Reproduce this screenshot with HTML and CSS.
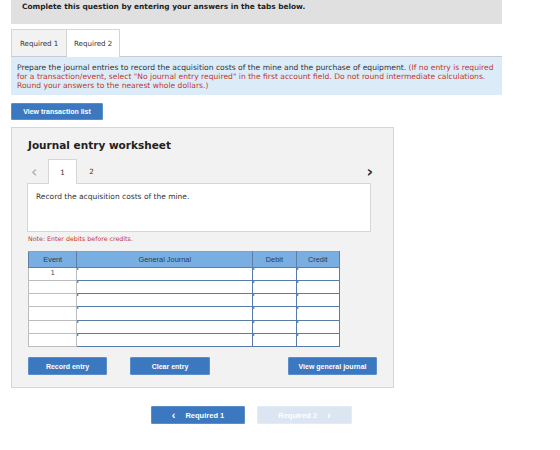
FILE: index.html
```html
<!DOCTYPE html>
<html>
<head>
<meta charset="utf-8">
<link rel="stylesheet" href="styles.css">
</head>
<body>
<div class="page">
  <div class="prompt-bar">Complete this question by entering your answers in the tabs below.</div>

  <div class="req-tabs">
    <div class="req-tab">Required 1</div>
    <div class="req-tab active">Required 2</div>
  </div>

  <div class="instructions">
    Prepare the journal entries to record the acquisition costs of the mine and the purchase of equipment. <span class="hint">(If no entry is required for a transaction/event, select "No journal entry required" in the first account field. Do not round intermediate calculations. Round your answers to the nearest whole dollars.)</span>
  </div>

  <button class="btn btn-list">View transaction list</button>

  <div class="worksheet">
    <h2 class="ws-title">Journal entry worksheet</h2>

    <div class="ws-nav">
      <span class="arrow prev">&lsaquo;</span>
      <span class="step active">1</span>
      <span class="step">2</span>
      <span class="arrow next">&rsaquo;</span>
    </div>

    <div class="ws-desc">Record the acquisition costs of the mine.</div>

    <div class="note">Note: Enter debits before credits.</div>

    <table class="journal">
      <colgroup>
        <col class="c-event">
        <col class="c-account">
        <col class="c-amt">
        <col class="c-amt">
      </colgroup>
      <thead>
        <tr>
          <th>Event</th>
          <th>General Journal</th>
          <th>Debit</th>
          <th>Credit</th>
        </tr>
      </thead>
      <tbody>
        <tr><td class="ev">1</td><td class="in"></td><td class="in"></td><td class="in"></td></tr>
        <tr><td class="ev"></td><td class="in"></td><td class="in"></td><td class="in"></td></tr>
        <tr><td class="ev"></td><td class="in"></td><td class="in"></td><td class="in"></td></tr>
        <tr><td class="ev"></td><td class="in"></td><td class="in"></td><td class="in"></td></tr>
        <tr><td class="ev"></td><td class="in"></td><td class="in"></td><td class="in"></td></tr>
        <tr><td class="ev"></td><td class="in"></td><td class="in"></td><td class="in"></td></tr>
      </tbody>
    </table>

    <div class="ws-actions">
      <button class="btn btn-record">Record entry</button>
      <button class="btn btn-clear">Clear entry</button>
      <button class="btn btn-view">View general journal</button>
    </div>
  </div>

  <div class="req-nav">
    <button class="btn btn-req"><span class="chev">&lsaquo;</span>Required 1</button>
    <button class="btn btn-req disabled">Required 2<span class="chev after">&rsaquo;</span></button>
  </div>
</div>
</body>
</html>
```
FILE: styles.css
```css
html, body {
  margin: 0;
  padding: 0;
  background: #fff;
}

.page {
  margin-left: 11px;
  width: 491px;
  font-family: "DejaVu Sans", Verdana, sans-serif;
  color: #222;
}

.prompt-bar {
  height: 24px;
  box-sizing: border-box;
  background: #e0e0e0;
  padding: 2px 0 0 11px;
  font-size: 7.4px;
  font-weight: bold;
  line-height: 9px;
  color: #222;
}

.req-tabs {
  display: flex;
  margin-top: 5px;
  height: 27px;
}

.req-tab {
  box-sizing: border-box;
  height: 27px;
  padding: 0 0 0 8px;
  display: flex;
  align-items: center;
  font-size: 7.1px;
  color: #333;
  background: #f2f2f2;
  border: 1px solid #d5d5d5;
  border-bottom: none;
}

.req-tab:first-child {
  width: 56px;
}

.req-tab.active {
  width: 53px;
  padding-left: 7px;
  background: #fff;
  border-left: none;
  position: relative;
  z-index: 1;
  margin-bottom: -1px;
  height: 28px;
}

.instructions {
  box-sizing: border-box;
  background: #dcebf8;
  border-top: 1px solid #c5ccd3;
  padding: 6px 8px 0 6px;
  font-size: 7.6px;
  line-height: 9px;
  color: #333;
  height: 39px;
}

.hint {
  color: #c0392b;
}

.btn {
  font-family: "Liberation Sans", Arial, sans-serif;
  font-weight: bold;
  font-size: 7px;
  color: #fff;
  background: #3b78bf;
  border: 1px solid #5b8fcb;
  border-radius: 1px;
  padding: 0;
  height: 18px;
  display: flex;
  align-items: center;
  justify-content: center;
}

.btn-list {
  margin-top: 8px;
  width: 92px;
  height: 17px;
}

.worksheet {
  margin-top: 7px;
  width: 383px;
  height: 261px;
  box-sizing: border-box;
  background: #f2f2f2;
  border: 1px solid #d6d6d6;
  padding: 0 22px 0 15px;
}

.ws-title {
  margin: 11px 0 0 1px;
  font-size: 10.5px;
  line-height: 12px;
  font-weight: bold;
  color: #222;
}

.ws-nav {
  display: flex;
  align-items: flex-end;
  margin-top: 7px;
  height: 25px;
}

.arrow {
  font-family: "DejaVu Sans", sans-serif;
  font-size: 16px;
  line-height: 20px;
  height: 22px;
  display: flex;
  align-items: center;
}

.arrow.prev {
  color: #aaa;
  margin-left: 4px;
  width: 17px;
}

.arrow.next {
  margin-left: auto;
  margin-right: -2px;
  color: #333;
  font-weight: bold;
}

.step {
  width: 29px;
  height: 24px;
  box-sizing: border-box;
  display: flex;
  align-items: center;
  justify-content: center;
  font-size: 7.2px;
  color: #333;
}

.step.active {
  background: #fff;
  border: 1px solid #d6d6d6;
  border-bottom: none;
  height: 25px;
  margin-bottom: -1px;
  position: relative;
  z-index: 1;
}

.ws-desc {
  box-sizing: border-box;
  width: 344px;
  height: 49px;
  background: #fff;
  border: 1px solid #d6d6d6;
  padding: 8px 8px;
  font-size: 7.5px;
  line-height: 9px;
  color: #333;
}

.note {
  margin: 3px 0 0 1px;
  font-size: 6.3px;
  line-height: 8px;
  color: #c0392b;
}

.journal {
  margin: 8px 0 0 1px;
  width: 312px;
  border-collapse: collapse;
  font-family: "Liberation Sans", Arial, sans-serif;
  table-layout: fixed;
  border: 1px solid #8aa1bd;
}

.c-event { width: 48px; }
.c-account { width: 174px; }
.c-amt { width: 43px; }

.journal th {
  background: #79aee3;
  color: #2e3b4a;
  font-size: 7.4px;
  font-weight: normal;
  height: 14.5px;
  padding: 0;
  border: 1px solid #5d7fa6;
  border-top-color: #8aa1bd;
}

.journal td {
  height: 12.3px;
  padding: 0;
  background: #fff;
}

.journal td.ev {
  border: 1px solid #bcbcbc;
  text-align: center;
  font-size: 7px;
  color: #444;
  vertical-align: top;
  line-height: 9px;
}

.journal td.in {
  border: 1.5px solid #557ba8;
  position: relative;
}

/* small marker in the corner of each entry field */
.journal td.in::before {
  content: "";
  position: absolute;
  left: 0;
  top: 0;
  border-style: solid;
  border-width: 1.5px 0 1.5px 2.5px;
  border-color: transparent transparent transparent #2f6db5;
}

.ws-actions {
  display: flex;
  margin: 10px 0 0 1px;
}

.btn-record { width: 79px; }
.btn-clear { width: 80px; margin-left: 23px; }
.btn-view { width: 89px; margin-left: auto; margin-right: -6px; }

.req-nav {
  display: flex;
  margin: 18px 0 0 140px;
  gap: 12px;
}

.btn-req {
  width: 94px;
  font-size: 7.5px;
}

.btn-req.disabled {
  width: 95px;
  background: #dbe6f2;
  border-color: #e3ebf5;
  color: #fff;
}

.chev {
  font-size: 11px;
  margin-right: 10px;
  line-height: 10px;
}

.chev.after {
  margin-right: 0;
  margin-left: 10px;
}
```
